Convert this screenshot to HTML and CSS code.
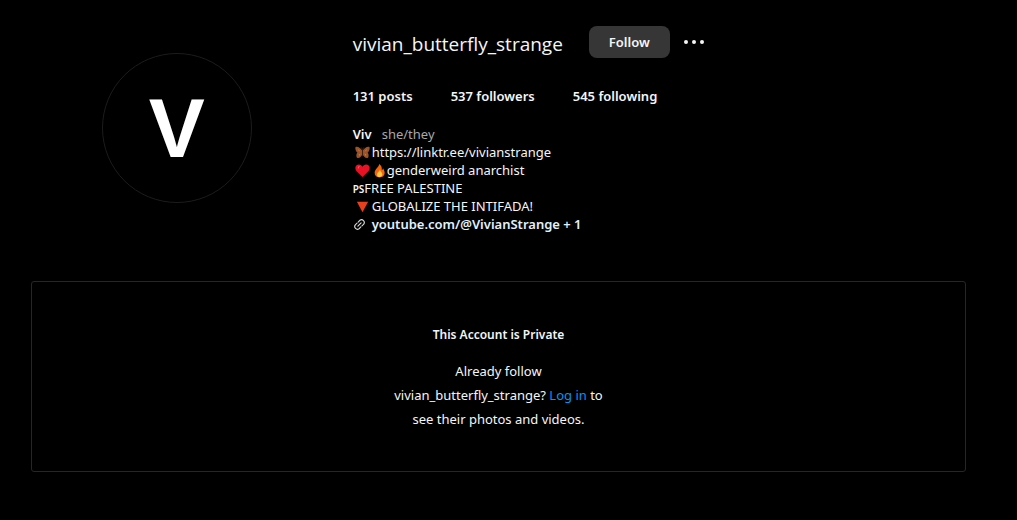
FILE: index.html
```
<!DOCTYPE html>
<html lang="en">
<head>
  <meta charset="UTF-8">
  <meta name="viewport" content="width=device-width, initial-scale=1.0">
  <title>vivian_butterfly_strange</title>
  <link rel="stylesheet" href="styles.css">
</head>

<body>
  <main>
    <header class="profile">
      <div class="photo">
        <div class="avatar">V</div>
      </div>

      <section class="info">
        <div class="title-row">
          <h2 class="username">vivian_butterfly_strange</h2>
          <button class="follow" type="button">Follow</button>
          <button class="more" type="button" aria-label="Options">
            <svg width="24" height="8" viewBox="0 0 24 8">
              <circle cx="4" cy="4" r="2" />
              <circle cx="12" cy="4" r="2" />
              <circle cx="20" cy="4" r="2" />
            </svg>
          </button>
        </div>

        <ul class="stats">
          <li>131 posts</li>
          <li>537 followers</li>
          <li>545 following</li>
        </ul>

        <div class="bio">
          <div class="name-row">
            <span class="name">Viv</span>
            <span class="pronouns">she/they</span>
          </div>
          <div class="line">
            <svg class="emoji" viewBox="0 0 16 16">
              <path fill="#9a5228" d="M8 6C6 3 3 1 .5 2c-.5 2 .3 4.500 2 6-1 1-1.500 3.500-.5 5.500C4.500 14.500 7 12.500 8 9.500c1 3 3.500 5 6 4 1-2 .5-4.500-.5-5.500 1.700-1.500 2.500-4 2-6C13 1 10 3 8 6z" />
              <path fill="#c9793c" d="M3 4l3 3-2-.5zM13 4l-3 3 2-.5zM4 10l2-1-1.500 3zM12 10l-2-1 1.500 3z" />
              <path fill="none" stroke="#3c1d10" d="M8 5v7M6.500 2.500L8 5l1.500-2.500" />
            </svg>
            <span>https://linktr.ee/vivianstrange</span>
          </div>
          <div class="line">
            <svg class="emoji" viewBox="0 0 16 16">
              <path fill="#e81224" d="M8 15L1.500 8.500C-1 5.500.8 1.500 4.200 1.500 6 1.500 7.300 2.500 8 4c.7-1.500 2-2.500 3.800-2.500 3.400 0 5.200 4 2.700 7z" />
              <path fill="#ff7885" d="M3 5.500C3 4 4 3.300 5.300 3.500 4.500 4 3.800 4.600 3.600 6z" />
            </svg>
            <svg class="emoji" viewBox="0 0 16 16">
              <path fill="#f7630c" d="M7.500 1c.5 3-4.700 5-4.700 9.500C2.800 13.500 5 15.500 8 15.500s5.500-2 5.500-5c0-2-1-3.500-1.700-5-.2 1-.6 1.700-1.300 2C10.800 4.500 9.500 2 7.500 1z" />
              <path fill="#ffc83d" d="M8.300 7c.2 2-3 3-3 5.500C5.300 14 6.500 15 8 15s3-1 3-2.700c0-2-2-3-2.700-5.300z" />
            </svg>
            <span>genderweird anarchist</span>
          </div>
          <div class="line"><span class="flag">PS</span><span>FREE PALESTINE</span></div>
          <div class="line">
            <svg class="emoji" viewBox="0 0 16 16">
              <path fill="#e8401c" d="M2 3h12L8 14z" />
            </svg>
            <span>GLOBALIZE THE INTIFADA!</span>
          </div>
          <a class="line site" href="#">
            <svg class="link-icon" viewBox="0 0 24 24">
              <path d="M9 15l6-6M9.500 7.500l3.300-3.300a5 5 0 0 1 7 7L16.500 14.500M14.500 16.500l-3.300 3.300a5 5 0 0 1-7-7L7.500 9.500" />
            </svg>
            <span>youtube.com/@VivianStrange + 1</span>
          </a>
        </div>
      </section>
    </header>

    <article class="private">
      <h2>This Account is Private</h2>
      <p>Already follow vivian_butterfly_strange? <a href="#">Log in</a> to see their photos and videos.</p>
    </article>
  </main>
</body>
</html>
```
FILE: styles.css
```
body {
  margin: 0;
  padding: 26px 51px 48px 31px;
  background: #000;
  color: #f5f5f5;
  font-family: "Noto Sans", "Open Sans", sans-serif;
  font-size: 13px;
  line-height: 18px;
}

main {
  max-width: 935px;
  margin: 0 auto;
}

h2 {
  margin: 0;
}

a {
  text-decoration: none;
}

button {
  border: none;
  padding: 0;
  font: inherit;
  color: inherit;
  cursor: pointer;
}

.profile {
  display: flex;
  gap: 30px;
  margin-bottom: 48px;
}

.photo {
  flex: 1;
  display: flex;
  justify-content: center;
  padding-top: 27px;
}

.avatar {
  width: 150px;
  height: 150px;
  box-sizing: border-box;
  border: 1px solid #1c1c1c;
  border-radius: 50%;
  font-family: "Liberation Sans", Arial, sans-serif;
  font-size: 84px;
  font-weight: bold;
  line-height: 148px;
  text-align: center;
  color: #fff;
}

.info {
  flex: 2 1 30px;
}

.title-row {
  display: flex;
  align-items: center;
  height: 32px;
}

.username {
  margin-right: 26px;
  padding-top: 4px;
  font-family: "Open Sans", "Noto Sans", sans-serif;
  font-size: 19px;
  font-weight: 400;
  line-height: 24px;
}

.follow {
  height: 32px;
  padding: 0 20px;
  border-radius: 8px;
  background: #363636;
  font-weight: 600;
}

.more {
  display: flex;
  margin-left: 12px;
  background: none;
}

.more svg {
  fill: #f5f5f5;
}

.stats {
  display: flex;
  gap: 38px;
  margin: 29px 0 20px;
  padding: 0;
  list-style: none;
  font-weight: 600;
}

.name-row {
  display: flex;
  gap: 10px;
}

.name {
  font-weight: 600;
}

.pronouns {
  color: #a8a8a8;
}

.line {
  display: flex;
  align-items: center;
}

.emoji {
  width: 15px;
  height: 15px;
  margin-left: 2px;
}

.line .emoji + span {
  margin-left: 2px;
}

.line .emoji + .emoji + span {
  margin-left: 0;
}

.flag {
  padding-top: 2px;
  font-size: 10px;
  font-weight: 600;
  line-height: 16px;
}

.site {
  color: #e0f1ff;
  font-weight: 600;
}

.link-icon {
  width: 13px;
  height: 13px;
  margin-right: 6px;
  fill: none;
  stroke: #d8d8d8;
  stroke-width: 2;
  stroke-linecap: round;
}

.private {
  padding: 41px 20px 40px;
  border: 1px solid #262626;
  border-radius: 3px;
  text-align: center;
}

.private h2 {
  margin-bottom: 12px;
  font-size: 12px;
  font-weight: 600;
  line-height: 24px;
}

.private p {
  max-width: 220px;
  margin: 0 auto;
  line-height: 24px;
}

.private a {
  color: #0095f6;
}
```
